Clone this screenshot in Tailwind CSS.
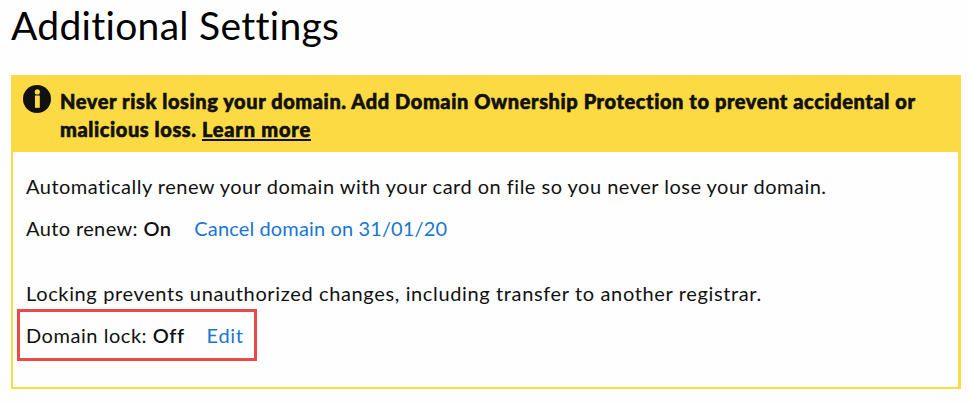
<!DOCTYPE html>
<html lang="en">
<head>
    <meta charset="UTF-8">
    <meta name="viewport" content="width=device-width, initial-scale=1.0">
    <title>Additional Settings</title>
    <script src="https://cdn.jsdelivr.net/npm/@tailwindcss/browser@4"></script>
</head>
<body class="bg-[#fefefe] h-[403px] overflow-hidden pl-[11px] pr-[9px] pt-px font-['Lato',sans-serif] text-[20px] leading-7 text-[#111] whitespace-nowrap">
    <h1 class="text-[39px] leading-[48px] tracking-[0.3px] text-black"><span>Additional Settings</span></h1>

    <section class="mt-[26px] h-[314px] border-2 border-r-[3px] border-t-0 border-[#fcda44]">
        <!-- Protection notice -->
        <div class="flex bg-[#fcda44] h-[77px] pt-3 pl-[10px]">
            <svg class="w-7 h-7 -mt-[2px] mr-[9px] shrink-0" viewBox="0 0 28 28" aria-hidden="true">
                <circle cx="14" cy="14" r="14" fill="#111"/>
                <circle cx="14.3" cy="6.9" r="2.6" fill="#fcda44"/>
                <rect x="12" y="10.5" width="4.8" height="12.3" fill="#fcda44"/>
            </svg>
            <p class="font-black tracking-[0.585px] [-webkit-text-stroke:0.6px_#111]">
                <span>Never risk losing your domain. Add Domain Ownership Protection to prevent accidental or</span><br>
                <span>malicious loss. <a href="#" class="underline decoration-2 underline-offset-2 tracking-[0.8px]">Learn more</a></span>
            </p>
        </div>

        <div class="pt-5 pl-[13px]">
            <p class="tracking-[0.49px]"><span>Automatically renew your domain with your card on file so you never lose your domain.</span></p>
            <div class="mt-[14px] flex">
                <span class="tracking-[0.38px]">Auto renew: <b class="font-semibold">On</b></span>
                <a href="#" class="ml-[23px] tracking-[0.13px] text-[#1976d2]">Cancel domain on 31/01/20</a>
            </div>

            <p class="mt-[37px] tracking-[0.635px]"><span>Locking prevents unauthorized changes, including transfer to another registrar.</span></p>
            <!-- Highlighted lock row -->
            <div class="mt-[2px] -ml-[9px] w-60 h-[52px] border-[3px] border-[#e84c4a] pt-[9px] pl-[6px] flex">
                <span class="tracking-[0.54px]">Domain lock: <b class="font-semibold">Off</b></span>
                <a href="#" class="ml-[22px] tracking-[0.7px] text-[#1976d2]">Edit</a>
            </div>
        </div>
    </section>
</body>
</html>
